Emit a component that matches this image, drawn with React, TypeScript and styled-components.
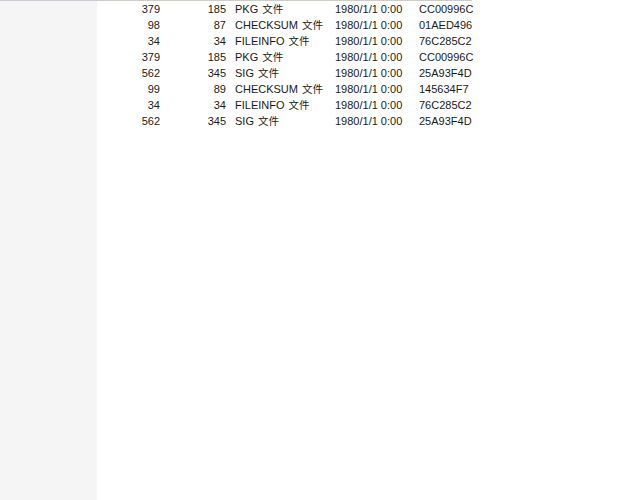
import React from "react";
import styled, { createGlobalStyle } from "styled-components";

const GlobalStyle = createGlobalStyle`
  html, body {
    margin: 0;
    padding: 0;
    background: #ffffff;
  }
`;

const Window = styled.div`
  display: flex;
  width: 626px;
  height: 500px;
  overflow: hidden;
  font-family: "Liberation Sans", "Noto Sans CJK SC", sans-serif;
  font-size: 11px;
  color: #1a1a1a;
`;

const NavPane = styled.div`
  width: 97px;
  flex-shrink: 0;
  background: #f5f5f5;
  border-top: 1px solid #c9ced6;
`;

const ListPane = styled.div`
  flex: 1;
  display: flex;
  flex-direction: column;
`;

const TopEdge = styled.div`
  width: 375px;
  height: 1px;
  background-image: repeating-linear-gradient(
    90deg,
    #b8c8da 0 1px,
    #d6d2cc 1px 2px
  );
`;

const Row = styled.div`
  display: grid;
  grid-template-columns: 63px 66px 100px 84px 80px;
  height: 16px;
  line-height: 16px;
  white-space: nowrap;
`;

const Cell = styled.span<{ $align?: "left" | "right" }>`
  text-align: ${p => p.$align ?? "left"};
  padding-left: ${p => (p.$align === "right" ? 0 : 9)}px;
  overflow: hidden;
`;

const Suffix = styled.span`
  font-family: "Noto Sans CJK SC", sans-serif;
  font-size: 10.5px;
  margin-left: 1px;
`;

type FileRow = {
  size: number;
  packed: number;
  kind: string;
  modified: string;
  crc: string;
};

const rows: FileRow[] = [
  { size: 379, packed: 185, kind: "PKG", modified: "1980/1/1 0:00", crc: "CC00996C" },
  { size: 98, packed: 87, kind: "CHECKSUM", modified: "1980/1/1 0:00", crc: "01AED496" },
  { size: 34, packed: 34, kind: "FILEINFO", modified: "1980/1/1 0:00", crc: "76C285C2" },
  { size: 379, packed: 185, kind: "PKG", modified: "1980/1/1 0:00", crc: "CC00996C" },
  { size: 562, packed: 345, kind: "SIG", modified: "1980/1/1 0:00", crc: "25A93F4D" },
  { size: 99, packed: 89, kind: "CHECKSUM", modified: "1980/1/1 0:00", crc: "145634F7" },
  { size: 34, packed: 34, kind: "FILEINFO", modified: "1980/1/1 0:00", crc: "76C285C2" },
  { size: 562, packed: 345, kind: "SIG", modified: "1980/1/1 0:00", crc: "25A93F4D" },
];

export default function App() {
  return (
    <>
      <GlobalStyle />
      <Window>
        <NavPane />
        <ListPane>
          <TopEdge />
          {rows.map((r, i) => (
            <Row key={i}>
              <Cell $align="right">{r.size}</Cell>
              <Cell $align="right">{r.packed}</Cell>
              <Cell>
                {r.kind} <Suffix>文件</Suffix>
              </Cell>
              <Cell>{r.modified}</Cell>
              <Cell>{r.crc}</Cell>
            </Row>
          ))}
        </ListPane>
      </Window>
    </>
  );
}
